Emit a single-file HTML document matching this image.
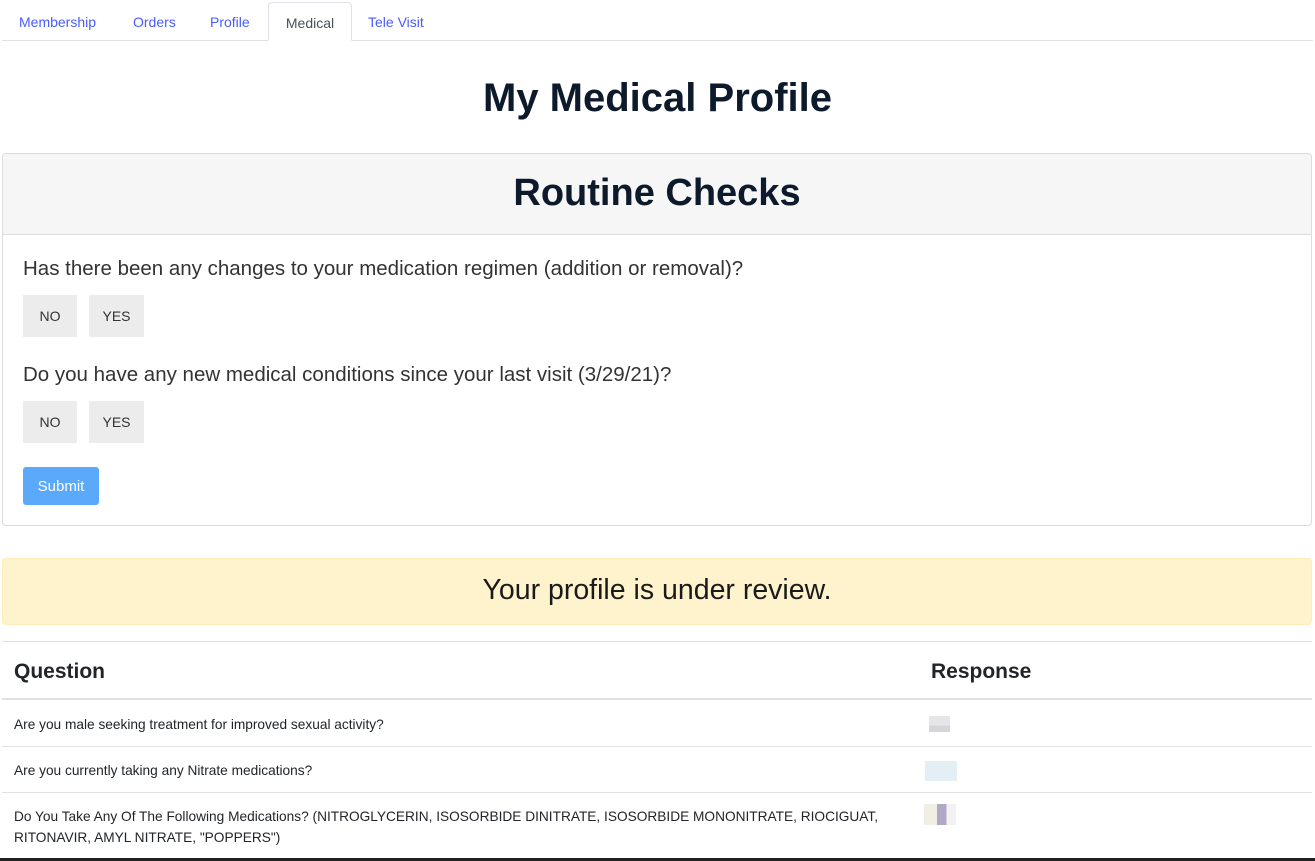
<!DOCTYPE html>
<html><head><style>
*{box-sizing:border-box;margin:0;padding:0}
body{width:1315px;height:861px;overflow:hidden;background:#fff;font-family:"Liberation Sans",sans-serif;color:#212529;position:relative}
.tabs{position:absolute;left:2px;top:0;width:1311px;height:41px;border-bottom:1px solid #dee2e6}
.tab{position:absolute;top:14px;font-size:14px;color:#4a5cff}
.tab.act{top:2px;height:39px;border:1px solid #dee2e6;border-bottom:1px solid #fff;border-radius:4px 4px 0 0;background:#fff;color:#495057;padding-top:12px;text-align:center}
h1{position:absolute;left:0;width:1315px;text-align:center;top:76px;font-size:40px;font-weight:bold;color:#0c1a2b}
.card{position:absolute;left:2px;top:153px;width:1310px;height:373px;border:1px solid #dcdcdc;border-radius:4px;overflow:hidden}
.ch{height:81px;background:#f6f6f6;border-bottom:1px solid #dcdcdc;text-align:center;font-size:38px;font-weight:bold;line-height:78px;color:#0c1a2b}
.q{position:absolute;left:20px;font-size:20.5px;color:#333}
.b{position:absolute;height:42px;background:#ececec;font-size:14px;line-height:42px;text-align:center;color:#333}
.sub{position:absolute;left:20px;top:313px;width:76px;height:38px;background:#5aa9fb;border-radius:3px;color:#fff;font-size:15px;line-height:40px;text-align:center}
.alert{position:absolute;left:2px;top:558px;width:1310px;height:67px;background:#fff3cd;border:1px solid #ffeeba;border-radius:4px;text-align:center;font-size:28.5px;line-height:62px;color:#1a1a1a}
.row{position:absolute;left:2px;width:1310px;border-top:1px solid #dee2e6}
.td{position:absolute;left:12px;font-size:13.7px;color:#212529;line-height:21px}
.px{position:absolute;left:925px;width:32px;height:20px}
</style></head><body>
<div class="tabs">
<div class="tab" style="left:17px">Membership</div>
<div class="tab" style="left:131px">Orders</div>
<div class="tab" style="left:208px">Profile</div>
<div class="tab act" style="left:266px;width:84px">Medical</div>
<div class="tab" style="left:366px">Tele Visit</div>
</div>
<h1>My Medical Profile</h1>
<div class="card">
<div class="ch">Routine Checks</div>
<div class="q" style="top:103px">Has there been any changes to your medication regimen (addition or removal)?</div>
<div class="b" style="left:20px;top:141px;width:54px">NO</div>
<div class="b" style="left:86px;top:141px;width:55px">YES</div>
<div class="q" style="top:209px">Do you have any new medical conditions since your last visit (3/29/21)?</div>
<div class="b" style="left:20px;top:247px;width:54px">NO</div>
<div class="b" style="left:86px;top:247px;width:55px">YES</div>
<div class="sub">Submit</div>
</div>
<div class="alert">Your profile is under review.</div>
<div class="row" style="top:641px;height:59px;border-bottom:2px solid #dee2e6">
<div style="position:absolute;left:12px;top:18px;font-size:21px;font-weight:bold">Question</div>
<div style="position:absolute;left:929px;top:18px;font-size:21px;font-weight:bold">Response</div>
</div>
<div class="row" style="top:746px"></div>
<div class="row" style="top:792px"></div>
<div class="td" style="top:714px;left:14px">Are you male seeking treatment for improved sexual activity?</div>
<div class="td" style="top:760px;left:14px">Are you currently taking any Nitrate medications?</div>
<div class="td" style="top:806px;left:14px">Do You Take Any Of The Following Medications? (NITROGLYCERIN, ISOSORBIDE DINITRATE, ISOSORBIDE MONONITRATE, RIOCIGUAT,<br>RITONAVIR, AMYL NITRATE, "POPPERS")</div>
<div class="px" style="top:716px;left:929px;width:21px;height:16px;background:linear-gradient(#e6e6e8 60%,#d4d6da 60%)"></div>
<div class="px" style="top:761px;background:#e4eef5"></div>
<div class="px" style="top:804px;left:924px;width:32px;height:21px;background:linear-gradient(90deg,#f1eee6 40%,#b3a7c8 40%,#b3a7c8 70%,#f3f1f1 70%)"></div>
<div style="position:absolute;left:0;top:858px;width:1315px;height:3px;background:#222"></div>
</body></html>
